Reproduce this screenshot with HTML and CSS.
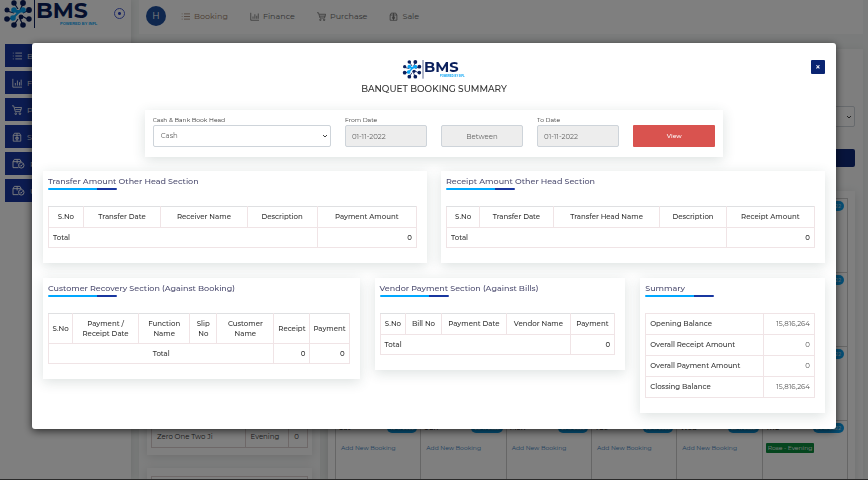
FILE: index.html
```html
<!DOCTYPE html>
<html lang="en">
<head>
<meta charset="utf-8">
<title>Banquet Booking Summary</title>
<link rel="stylesheet" href="styles.css">
</head>
<body>
<svg class="defs" aria-hidden="true">
  <symbol id="logo" viewBox="0 0 96 30">
    <g stroke="#0a1f5c" stroke-width="1.200">
      <path d="M11 3l4 6M20 4l-3 6M4 11l7 2M4 20l7-3M26 10l-6 3M26 20l-7-4M11 25l4-6M20 25l-3-6"/>
    </g>
    <g fill="#0a1f5c">
      <circle cx="11" cy="3" r="2.700"/><circle cx="20" cy="3" r="2.900"/>
      <circle cx="4" cy="10" r="2.500"/><circle cx="26" cy="10" r="2.900"/>
      <circle cx="4" cy="19" r="2.800"/><circle cx="26" cy="19" r="2.700"/>
      <circle cx="11" cy="25" r="2.800"/><circle cx="20" cy="25" r="2.800"/>
      <circle cx="18" cy="17" r="2.400"/>
    </g>
    <g fill="#0aa5f5" stroke="#0aa5f5" stroke-width="2">
      <path d="M11 10l4 3 5-3M10 18l5-5"/>
      <circle cx="11" cy="10" r="1.800"/><circle cx="20" cy="10" r="1.800"/><circle cx="10" cy="18" r="1.800"/>
    </g>
    <path d="M31.500 0v28" stroke="#0a1f5c" stroke-width="1"/>
    <text x="33" y="18" class="logo-name">BMS</text>
    <text x="57" y="25" class="logo-tag">POWERED BY INFL</text>
  </symbol>
  <symbol id="i-list" viewBox="0 0 12 12"><path d="M1 2.500h1M4 2.500h8M1 6h1M4 6h8M1 9.500h1M4 9.500h8"/></symbol>
  <symbol id="i-chart" viewBox="0 0 12 12"><path d="M1 1v10h11M4 9V6M6.500 9V3M9 9V5M11 9V2"/></symbol>
  <symbol id="i-cart" viewBox="0 0 12 12"><path d="M0 1h2l2 7h6l1.500-5H3M4 5.500h7"/><circle cx="4.500" cy="10.500" r="1"/><circle cx="9.500" cy="10.500" r="1"/></symbol>
  <symbol id="i-box" viewBox="0 0 12 12"><path d="M1.500 4h9v7h-9zM1.500 4l1.500-2.500h6L10.500 4M6 1.500V11M4.500 6.500h3v2h-3z"/></symbol>
  <symbol id="i-check" viewBox="0 0 14 12"><path d="M7 10.500H1V4h9M1 4l1.500-2.500h6L10 4M5.500 1.500V6"/><circle cx="10" cy="8" r="3"/><path d="M8.500 8l1 1 2-2"/></symbol>
</svg>

<div class="app">
  <aside class="sidebar">
    <div class="brand">
      <svg class="brand-logo" role="img" aria-label="BMS"><use href="#logo"/></svg>
      <span class="pin"></span>
    </div>
    <nav class="side-nav">
      <a href="#"><svg><use href="#i-list"/></svg>Booking</a>
      <a href="#"><svg><use href="#i-chart"/></svg>Finance</a>
      <a href="#"><svg><use href="#i-cart"/></svg>Purchase</a>
      <a href="#"><svg><use href="#i-box"/></svg>Sale</a>
      <a href="#"><svg class="wide"><use href="#i-check"/></svg>Reports</a>
      <a href="#"><svg class="wide"><use href="#i-check"/></svg>Users</a>
    </nav>
  </aside>
  <div class="main">
    <header class="topbar">
      <span class="avatar">H</span>
      <a href="#" class="active"><svg><use href="#i-list"/></svg>Booking</a>
      <a href="#"><svg><use href="#i-chart"/></svg>Finance</a>
      <a href="#"><svg><use href="#i-cart"/></svg>Purchase</a>
      <a href="#"><svg><use href="#i-box"/></svg>Sale</a>
    </header>
    <div class="board">
      <section class="pane pane-left">
        <div class="tile tile-tall">
          <table class="halls">
            <tbody><tr><td>Zero One Two Ji</td><td>Evening</td><td>0</td></tr></tbody>
          </table>
        </div>
        <div class="tile tile-next"><div class="frame"></div></div>
      </section>
      <section class="pane pane-right">
        <div class="search">
          <select aria-label="Hall"><option></option></select>
          <button type="button" aria-label="Search"></button>
        </div>
        <div class="tile calendar">
          <div class="days">
            <div class="day"><b></b><i>01-11-2022</i></div><div class="day"><b></b><i>02-11-2022</i></div><div class="day"><b></b><i>03-11-2022</i></div><div class="day"><b></b><i>04-11-2022</i></div><div class="day"><b></b><i>05-11-2022</i></div><div class="day"><b></b><i>06-11-2022</i></div>
            <div class="day"><b></b><i>07-11-2022</i></div><div class="day"><b></b><i>08-11-2022</i></div><div class="day"><b></b><i>09-11-2022</i></div><div class="day"><b></b><i>10-11-2022</i></div><div class="day"><b></b><i>11-11-2022</i></div><div class="day"><b></b><i>12-11-2022</i></div>
            <div class="day"><b></b><i>13-11-2022</i></div><div class="day"><b></b><i>14-11-2022</i></div><div class="day"><b></b><i>15-11-2022</i></div><div class="day"><b></b><i>16-11-2022</i></div><div class="day"><b></b><i>17-11-2022</i></div><div class="day"><b></b><i>18-11-2022</i></div>
            <div class="day"><b>Sat</b><i>19-11-2022</i><a href="#">Add New Booking</a></div>
            <div class="day"><b>Sun</b><i>20-11-2022</i><a href="#">Add New Booking</a></div>
            <div class="day"><b>Mon</b><i>21-11-2022</i><a href="#">Add New Booking</a></div>
            <div class="day"><b>Tue</b><i>22-11-2022</i><a href="#">Add New Booking</a></div>
            <div class="day"><b>Wed</b><i>23-11-2022</i><a href="#">Add New Booking</a></div>
            <div class="day"><b>Thu</b><i>24-11-2022</i><a href="#" class="booked">Rose - Evening</a></div>
          </div>
        </div>
      </section>
    </div>
  </div>
</div>

<div class="backdrop">
  <div class="modal" role="dialog" aria-labelledby="modal-title">
    <div class="modal-head">
      <svg class="modal-logo" role="img" aria-label="BMS"><use href="#logo"/></svg>
      <button type="button" class="close" aria-label="Close">×</button>
    </div>
    <h1 id="modal-title">BANQUET BOOKING SUMMARY</h1>

    <form class="card filters">
      <div class="field">
        <label for="head">Cash &amp; Bank Book Head</label>
        <select id="head"><option>Cash</option></select>
      </div>
      <div class="field">
        <label for="from">From Date</label>
        <input id="from" type="text" value="01-11-2022" readonly>
      </div>
      <div class="field">
        <input class="between" type="text" value="Between" aria-label="Between" readonly>
      </div>
      <div class="field">
        <label for="to">To Date</label>
        <input id="to" type="text" value="01-11-2022" readonly>
      </div>
      <div class="field">
        <button type="button" class="view">View</button>
      </div>
    </form>

    <div class="row halves">
      <section class="card">
        <h2>Transfer Amount Other Head Section</h2>
        <table class="grid transfer">
          <thead><tr><th>S.No</th><th>Transfer Date</th><th>Receiver Name</th><th>Description</th><th>Payment Amount</th></tr></thead>
          <tbody><tr><td colspan="4">Total</td><td class="num">0</td></tr></tbody>
        </table>
      </section>
      <section class="card">
        <h2>Receipt Amount Other Head Section</h2>
        <table class="grid receipt">
          <thead><tr><th>S.No</th><th>Transfer Date</th><th>Transfer Head Name</th><th>Description</th><th>Receipt Amount</th></tr></thead>
          <tbody><tr><td colspan="4">Total</td><td class="num">0</td></tr></tbody>
        </table>
      </section>
    </div>

    <div class="row thirds">
      <section class="card">
        <h2>Customer Recovery Section (Against Booking)</h2>
        <table class="grid recovery">
          <thead><tr><th>S.No</th><th>Payment /<br>Receipt Date</th><th>Function<br>Name</th><th>Slip<br>No</th><th>Customer<br>Name</th><th>Receipt</th><th>Payment</th></tr></thead>
          <tbody><tr><td colspan="5" class="mid">Total</td><td class="num">0</td><td class="num">0</td></tr></tbody>
        </table>
      </section>
      <section class="card">
        <h2>Vendor Payment Section (Against Bills)</h2>
        <table class="grid vendor">
          <thead><tr><th>S.No</th><th>Bill No</th><th>Payment Date</th><th>Vendor Name</th><th>Payment</th></tr></thead>
          <tbody><tr><td colspan="4">Total</td><td class="num">0</td></tr></tbody>
        </table>
      </section>
      <section class="card">
        <h2>Summary</h2>
        <table class="grid totals">
          <tbody>
            <tr><th>Opening Balance</th><td class="num">15,816,264</td></tr>
            <tr><th>Overall Receipt Amount</th><td class="num">0</td></tr>
            <tr><th>Overall Payment Amount</th><td class="num">0</td></tr>
            <tr><th>Clossing Balance</th><td class="num">15,816,264</td></tr>
          </tbody>
        </table>
      </section>
    </div>
  </div>
</div>
</body>
</html>
```
FILE: styles.css
```css
* { box-sizing: border-box; }

body {
  margin: 0;
  background: #f4f7f6;
  color: #333;
  font-family: Montserrat, Inter, "Open Sans", sans-serif;
  font-size: 7px;
  line-height: 10px;
}

a { text-decoration: none; color: inherit; }
button, input, select { font: inherit; margin: 0; }
.defs { position: absolute; width: 0; height: 0; }
symbol, .brand-logo, .modal-logo { overflow: visible; }
.logo-name { font: 700 22px Montserrat, "DejaVu Sans", sans-serif; fill: #0a1f5c; }
.logo-tag { font: bold 4px "Liberation Sans", sans-serif; fill: #0aa5f5; }

/* Page behind the dialog */
.app { display: flex; height: 100vh; overflow: hidden; border-bottom: 1px solid #555; }
.sidebar { flex: 0 0 131px; background: #fff; box-shadow: 0 0 8px #0002; }
.brand { display: flex; justify-content: space-between; padding: 0 6px 0 3px; height: 44px; }
.brand-logo { width: 96px; height: 30px; }
.pin {
  width: 11px; height: 11px; margin-top: 8px;
  border: 1px solid #4a5fd0; border-radius: 50%;
  background: radial-gradient(circle, #2b44c8 1px, #fff 2px);
}
.side-nav { display: flex; flex-direction: column; gap: 4px; padding: 0 5px; }
.side-nav a {
  display: flex; align-items: center; gap: 5px;
  height: 23px; padding-left: 7px;
  background: #1837a0; color: #fff; font-size: 8px;
}
.side-nav svg, .topbar svg { width: 9px; height: 9px; fill: none; stroke: currentColor; }
.side-nav svg { width: 10px; height: 10px; }
.side-nav .wide { width: 13px; height: 11px; }

.main { flex: 1; display: flex; flex-direction: column; padding: 0 5px 0 8px; min-width: 0; }
.topbar {
  display: flex; align-items: center; gap: 22px;
  height: 34px; padding: 0 0 2px 7px; background: #fff; font-size: 8px; color: #666;
}
.topbar a { display: flex; align-items: center; gap: 4px; }
.topbar .active { color: #9a7a66; }
.avatar {
  width: 20px; height: 20px; border-radius: 50%; margin-right: -7px;
  background: #1f4e9c; color: #fff; font-size: 9px; line-height: 20px; text-align: center;
}
.board { flex: 1; display: flex; gap: 8px; margin-top: 15px; min-height: 0; }
.pane { background: #fcfdfd; padding: 0 8px; box-shadow: 0 0 8px #0001; }
.pane-left { flex: 0 0 181px; }
.pane-right { flex: 1; padding-left: 0; }
.tile { background: #fff; box-shadow: 0 2px 10px #0002; }
.tile-tall { display: flex; align-items: flex-end; height: 406px; padding: 5px 4px 7px; }
.tile-next { margin-top: 13px; height: 80px; padding: 8px 4px; }
.frame { height: 60px; border: 1px solid #ddd0d0; }
.halls { width: 100%; border-collapse: collapse; table-layout: fixed; }
.halls td { border: 1px solid #ddd0d0; height: 21px; padding: 0 5px; }
.halls td:first-child { width: 60%; }
.halls td:nth-child(2) { width: 28%; }
.search { display: flex; flex-direction: column; gap: 22px; padding: 57px 0 0 7px; height: 142px; }
.search select { height: 21px; }
.search button { height: 18px; border: 0; border-radius: 2px; background: #0f2878; }
.calendar { padding: 7px 7px 0; }
.days { display: grid; grid-template-columns: repeat(6, 1fr); border-top: 1px solid #ccc; border-left: 1px solid #ccc; }
.day {
  display: grid; grid-template-columns: 1fr auto; align-content: start; row-gap: 10px;
  height: 74px; padding: 2px 3px 0; border-right: 1px solid #ccc; border-bottom: 1px solid #ccc;
}
.day b { font-weight: 500; }
.day i { border-radius: 5px; padding: 0 3px; background: #0aa0ee; color: #fff; font-style: normal; font-size: 5px; }
.day a { grid-column: 1 / -1; justify-self: start; padding: 0 2px; color: #3c7fc0; font-size: 6px; }
.day .booked { background: #0a8a3c; color: #fff; border-radius: 1px; }

/* Dialog */
.backdrop { position: fixed; inset: 0; padding: 43px 32px; background: rgba(0, 0, 0, .5); overflow: hidden; }
.modal { background: #fff; border-radius: 3px; padding: 17px 11px 16px; box-shadow: 0 2px 8px #000a; }
.modal-head { display: grid; grid-template-columns: 1fr auto 1fr; }
.modal-logo { grid-column: 2; width: 64px; height: 20px; }
.close {
  justify-self: end; width: 14px; height: 14px; padding: 0;
  border: 0; border-radius: 1px; background: #0a2472; color: #fff;
  font-size: 9px; font-weight: 600; line-height: 14px;
}
h1 { margin: 2px 0 15px; font-size: 9px; line-height: 13px; font-weight: 500; text-align: center; }
.card { background: #fff; box-shadow: 0 3px 12px rgba(40, 70, 60, .16); padding: 5px 10px 15px 5px; }
.filters {
  display: grid; grid-template-columns: 178fr repeat(4, 82fr); gap: 14px; align-items: end;
  width: 74%; margin: 0 auto 14px; padding: 5px 8px 10px;
}
.field { display: flex; flex-direction: column; }
.field label { font-size: 6px; line-height: 10px; }
.field input, .field select, .search select {
  width: 100%; padding: 0 6px;
  border: 1px solid #ced4da; border-radius: 2px; background: #ededed; color: #666;
}
.field input, .field select { height: 22px; }
.field select, .search select {
  appearance: none; padding: 0 7px;
  background: #fff url("data:image/svg+xml,%3Csvg xmlns='http://www.w3.org/2000/svg' viewBox='0 0 6 4'%3E%3Cpath d='M1 1l2 2 2-2' fill='none' stroke='%23444'/%3E%3C/svg%3E") no-repeat right 2px center / 6px 4px;
}
.field .between { text-align: center; }
.view { height: 22px; border: 0; border-radius: 1px; background: #d9534f; color: #fff; font-size: 6px; font-weight: 500; }

.row { display: grid; align-items: start; }
.halves { grid-template-columns: 1fr 1fr; gap: 14px; margin-bottom: 15px; }
.thirds { grid-template-columns: 317fr 251fr 185fr; gap: 15px; }
h2 { margin: 0 0 16px; font-size: 8px; line-height: 10px; font-weight: 500; color: #4d4d70; white-space: nowrap; }
h2::after {
  content: ""; display: block; width: 69px; height: 2px; margin-top: 2px; border-radius: 1px;
  background: linear-gradient(90deg, #00a8ff 71%, #1837a0 71%);
}
.grid { width: 100%; border-collapse: collapse; table-layout: fixed; }
.grid th, .grid td { height: 20px; padding: 0 4px; border: 1px solid #f0e4e6; font-weight: 500; white-space: nowrap; }
.grid th { padding: 0; }
.grid thead th { height: 21px; border-top-color: #dfe0e2; }
.grid .num { text-align: right; }
.grid .mid { text-align: center; }
.grid.recovery thead th { height: 30px; }
.transfer th:nth-child(1) { width: 9.5%; }
.transfer th:nth-child(2) { width: 21%; }
.transfer th:nth-child(3) { width: 23.5%; }
.transfer th:nth-child(4) { width: 19%; }
.receipt th:nth-child(1) { width: 9%; }
.receipt th:nth-child(2) { width: 20%; }
.receipt th:nth-child(3) { width: 29%; }
.receipt th:nth-child(4) { width: 18%; }
.recovery th:nth-child(1) { width: 8%; }
.recovery th:nth-child(2) { width: 22%; }
.recovery th:nth-child(3) { width: 17%; }
.recovery th:nth-child(4) { width: 9%; }
.recovery th:nth-child(5) { width: 19%; }
.recovery th:nth-child(6) { width: 12%; }
.vendor th:nth-child(1) { width: 11%; }
.vendor th:nth-child(2) { width: 15%; }
.vendor th:nth-child(3) { width: 28%; }
.vendor th:nth-child(4) { width: 27%; }
.grid.totals th { width: 70%; height: 21px; padding: 0 4px; text-align: left; }
.totals .num { font-weight: 400; color: #555; }
```
